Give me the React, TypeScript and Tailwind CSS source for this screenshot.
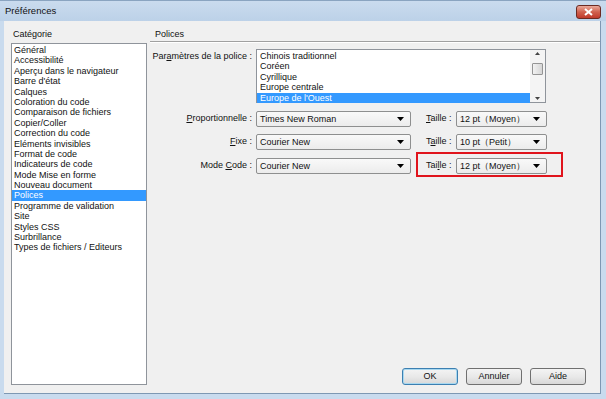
import React from "react";

const CATEGORIES = [
  "Général",
  "Accessibilité",
  "Aperçu dans le navigateur",
  "Barre d'état",
  "Calques",
  "Coloration du code",
  "Comparaison de fichiers",
  "Copier/Coller",
  "Correction du code",
  "Eléments invisibles",
  "Format de code",
  "Indicateurs de code",
  "Mode Mise en forme",
  "Nouveau document",
  "Polices",
  "Programme de validation",
  "Site",
  "Styles CSS",
  "Surbrillance",
  "Types de fichiers / Editeurs",
];

const ENCODINGS = ["Chinois traditionnel", "Coréen", "Cyrillique", "Europe centrale", "Europe de l'Ouest"];

function Select({ value, width }: { value: string; width: string }) {
  return (
    <div
      className={`${width} h-[16px] flex items-center justify-between pl-[3px] pr-[6px] border border-[#8e8f8f] rounded-[2px] bg-gradient-to-b from-[#f9f9f9] to-[#ececec]`}
    >
      <span className="leading-none whitespace-nowrap">{value}</span>
      <svg width="7" height="4" viewBox="0 0 7 4">
        <path d="M0 0h7L3.5 4z" fill="#000" />
      </svg>
    </div>
  );
}

// libellé avec la lettre d'accès soulignée
function Label({ text, at }: { text: string; at: number }) {
  return (
    <>
      {text.slice(0, at)}
      <span className="underline underline-offset-1">{text[at]}</span>
      {text.slice(at + 1)}
    </>
  );
}

function Row({
  label,
  at,
  font,
  size,
  sizeAt,
  mark,
  mt,
}: {
  label: string;
  at: number;
  font: string;
  size: string;
  sizeAt: number;
  mark?: boolean;
  mt: string;
}) {
  return (
    <div className={`flex items-center ${mt}`}>
      <div className="w-[106px] pr-[4px] text-right whitespace-nowrap">
        <Label text={label} at={at} /> :
      </div>
      <Select value={font} width="w-[155px]" />
      <div className="relative flex items-center">
        <div className="w-[30px] ml-[15px] whitespace-nowrap">
          <Label text="Taille" at={sizeAt} /> :
        </div>
        <Select value={size} width="w-[91px]" />
        {mark && (
          <div className="absolute left-[5px] top-[-6px] w-[147px] h-[25px] border-2 border-[#e0141c]" />
        )}
      </div>
    </div>
  );
}

function Button({ children, primary }: { children: React.ReactNode; primary?: boolean }) {
  return (
    <button
      className={`h-[17px] w-[56px] rounded-[3px] border ${
        primary ? "border-[#3c7fb1] shadow-[inset_0_0_0_1px_#a8d8f0]" : "border-[#707070]"
      } bg-gradient-to-b from-[#f4f4f4] via-[#e9e9e9] to-[#d8d8d8] leading-none`}
    >
      {children}
    </button>
  );
}

export default function App() {
  return (
    <div className="w-[606px] h-[399px] flex flex-col bg-[#c9dbee] text-[#111] text-[9px] font-['Liberation_Sans',Arial,sans-serif] overflow-hidden">
      {/* barre de titre */}
      <div className="h-[21px] shrink-0 flex items-center justify-between pl-[5px] pr-[5px] bg-gradient-to-b from-[#cadbee] to-[#bcd1e8] border-t border-[#8aa4c0]">
        <span className="text-[9.5px] leading-none">Préférences</span>
        <div className="w-[25px] h-[14px] mt-[1px] rounded-[3px] border border-[#6b2a22] bg-gradient-to-b from-[#e9a99b] via-[#d0614e] to-[#c0392b] flex items-center justify-center">
          <svg width="9" height="8" viewBox="0 0 9 8">
            <path d="M1 1l7 6M8 1L1 7" stroke="#fff" strokeWidth="2" />
          </svg>
        </div>
      </div>

      {/* corps */}
      <div className="flex-1 flex ml-[4px] mr-[5px] mb-[5px] bg-[#f0f0f0] border-r border-b border-[#7e98b3]">
        <div className="w-[146px] shrink-0 pl-[7px] pt-[7px] pb-[8px] flex flex-col">
          <div className="h-[12px] leading-[12px] pl-[2px]">Catégorie</div>
          <div className="mt-[3px] flex-1 w-[136px] bg-white border border-[#8f949b] pt-[1px]">
            {CATEGORIES.map((c) => (
              <div
                key={c}
                className={`h-[10.4px] leading-[10.4px] px-[2px] whitespace-nowrap ${
                  c === "Polices" ? "bg-[#3399ff] text-white" : ""
                }`}
              >
                {c}
              </div>
            ))}
          </div>
        </div>

        <div className="flex-1 pt-[7px] pb-[8px] flex flex-col">
          <div className="h-[12px] leading-[12px] pl-[5px]">Polices</div>
          <div className="mt-[1px] h-[2px] border-t border-[#a0a0a0] border-b border-b-white" />

          <div className="mt-[6px] flex">
            <div className="w-[106px] pr-[4px] text-right pt-[2px] leading-[10px]">
              <Label text="Paramètres de la police" at={3} /> :
            </div>
            <div className="w-[290px] h-[54px] bg-white border border-[#8f949b] flex">
              <div className="flex-1 pt-[1px]">
                {ENCODINGS.map((e, i) => (
                  <div
                    key={e}
                    className={`h-[10.4px] leading-[10.4px] px-[3px] whitespace-nowrap ${
                      i === 4 ? "bg-[#3399ff] text-white" : ""
                    }`}
                  >
                    {e}
                  </div>
                ))}
              </div>
              <div className="w-[15px] bg-[#f4f4f4] flex flex-col items-center justify-between py-[2px]">
                <svg width="5" height="3" viewBox="0 0 5 3">
                  <path d="M0 3h5L2.5 0z" fill="#444" />
                </svg>
                <div className="w-[11px] h-[12px] -mt-[14px] rounded-[1px] border border-[#959595] bg-gradient-to-r from-[#f2f2f2] to-[#d6d6d6]" />
                <svg width="5" height="3" viewBox="0 0 5 3">
                  <path d="M0 0h5L2.5 3z" fill="#444" />
                </svg>
              </div>
            </div>
          </div>

          <Row label="Proportionnelle" at={0} font="Times New Roman" size="12 pt（Moyen）" sizeAt={0} mt="mt-[8px]" />
          <Row label="Fixe" at={0} font="Courier New" size="10 pt（Petit）" sizeAt={1} mt="mt-[7px]" />
          <Row label="Mode Code" at={5} font="Courier New" size="12 pt（Moyen）" sizeAt={3} mark mt="mt-[8px]" />

          <div className="mt-auto flex justify-end gap-[8px] pr-[14px]">
            <Button primary>OK</Button>
            <Button>Annuler</Button>
            <Button>Aide</Button>
          </div>
        </div>
      </div>
    </div>
  );
}
